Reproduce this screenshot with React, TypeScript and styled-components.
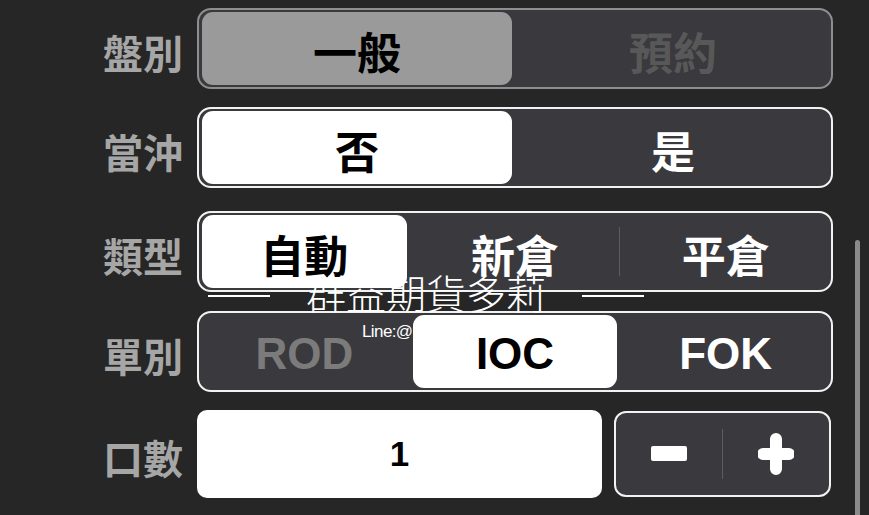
import React, { FC } from 'react';
import styled, { createGlobalStyle } from 'styled-components';

const GlobalStyle = createGlobalStyle`
  html, body {
    margin: 0;
    padding: 0;
    background: #262626;
    overflow: hidden;
  }
  body {
    font-family: 'Noto Sans CJK TC', 'Liberation Sans', sans-serif;
  }
`;

const Page = styled.div`
  position: relative;
  width: 869px;
  height: 515px;
  padding-top: 8px;
  box-sizing: border-box;
  display: flex;
  flex-direction: column;
`;

const Row = styled.div<{ $height?: number; $top?: number }>`
  display: grid;
  grid-template-columns: 183px 636px;
  column-gap: 14px;
  align-items: center;
  height: ${p => p.$height ?? 81}px;
  margin-top: ${p => p.$top ?? 0}px;
`;

const Label = styled.div`
  text-align: right;
  color: #a6a6a6;
  font-size: 40px;
  font-weight: 700;
  line-height: 1;
  padding-top: 6px;
`;

const Segmented = styled.div<{ $dim?: boolean }>`
  display: flex;
  gap: 6px;
  height: 100%;
  box-sizing: border-box;
  padding: 2px 3px;
  border: 2px solid ${p => (p.$dim ? '#8e8e8e' : '#f2f2f2')};
  border-radius: 14px;
  background: #3a393e;
`;

const Segment = styled.div<{
  $active?: boolean;
  $dim?: boolean;
  $latin?: boolean;
  $muted?: boolean;
  $divider?: boolean;
}>`
  position: relative;
  flex: 1;
  display: flex;
  align-items: center;
  justify-content: center;
  border-radius: 11px;
  background: ${p => (p.$active ? (p.$dim ? '#9a9a9a' : '#ffffff') : 'transparent')};
  color: ${p => (p.$active ? '#000' : p.$muted ? (p.$latin ? '#7b7b7b' : '#585858') : '#ffffff')};
  font-family: ${p =>
    p.$latin
      ? "'Liberation Sans', Arial, sans-serif"
      : "'Noto Sans CJK TC', sans-serif"};
  font-size: 44px;
  font-weight: 700;
  line-height: 1;
  padding-top: 4px;

  &::before {
    content: '';
    display: ${p => (p.$divider ? 'block' : 'none')};
    position: absolute;
    left: -4px;
    top: 12px;
    bottom: 12px;
    width: 1px;
    background: #5d5c62;
  }
`;

const QtyWrap = styled.div`
  display: flex;
  gap: 12px;
  height: 100%;
`;

const QtyInput = styled.div`
  width: 405px;
  background: #fff;
  border-radius: 10px;
  display: flex;
  align-items: center;
  justify-content: center;
  font-family: 'Liberation Sans', Arial, sans-serif;
  font-weight: 700;
  font-size: 35px;
  color: #000;
`;

const Stepper = styled.div`
  width: 217px;
  margin: 1px 0;
  box-sizing: border-box;
  border: 2px solid #f2f2f2;
  border-radius: 12px;
  background: #3a393e;
  display: flex;
  align-items: center;
`;

const StepButton = styled.div`
  flex: 1;
  height: 100%;
  display: flex;
  align-items: center;
  justify-content: center;
`;

const StepDivider = styled.div`
  width: 1px;
  height: 50px;
  background: #5d5c62;
`;

const ScrollBar = styled.div`
  position: absolute;
  left: 855px;
  top: 240px;
  width: 5px;
  bottom: -10px;
  border-radius: 3px;
  background: #8a8a8a;
`;

// overlay text drawn on top of the form, as in the screenshot
const Watermark = styled.div`
  position: absolute;
  left: 208px;
  top: 280px;
  width: 436px;
  pointer-events: none;
  color: #ffffff;
  font-family: 'Liberation Sans', 'Noto Sans CJK TC', sans-serif;
`;

const MarkTitle = styled.div`
  display: flex;
  align-items: center;
  justify-content: space-between;
  height: 30px;
  font-size: 40px;
  font-weight: 300;
  line-height: 30px;
`;

const MarkLine = styled.div`
  width: 62px;
  height: 2px;
  margin-top: 1px;
  background: #ffffff;
`;

const MarkSub = styled.div`
  margin: 13px 0 0 154px;
  font-size: 17px;
  letter-spacing: -0.6px;
  line-height: 18px;
`;

type Option = { text: string; active?: boolean; muted?: boolean };

const SegmentRow: FC<{
  label: string;
  options: Option[];
  top?: number;
  dim?: boolean;
  latin?: boolean;
}> = ({ label, options, top, dim, latin }) => (
  <Row $top={top}>
    <Label>{label}</Label>
    <Segmented $dim={dim}>
      {options.map((o, i) => {
        const prev = options[i - 1];
        const divider = i > 0 && !o.active && prev && !prev.active;
        return (
          <Segment
            key={o.text}
            $active={o.active}
            $dim={dim}
            $latin={latin}
            $muted={o.muted}
            $divider={divider}
          >
            {o.text}
          </Segment>
        );
      })}
    </Segmented>
  </Row>
);

const MinusIcon = () => (
  <svg width="36" height="16" viewBox="0 0 36 16">
    <rect x="0" y="0" width="36" height="15" rx="2" fill="#fff" />
  </svg>
);

const PlusIcon = () => (
  <svg width="36" height="42" viewBox="0 0 36 42">
    <path
      d="M18 6 V36 M5 21 H31"
      stroke="#fff"
      strokeWidth="12"
      strokeLinecap="round"
      fill="none"
    />
  </svg>
);

export default function App() {
  return (
    <>
      <GlobalStyle />
      <Page>
        <SegmentRow
          label="盤別"
          dim
          options={[{ text: '一般', active: true }, { text: '預約', muted: true }]}
        />
        <SegmentRow
          label="當沖"
          top={18}
          options={[{ text: '否', active: true }, { text: '是' }]}
        />
        <SegmentRow
          label="類型"
          top={23}
          options={[{ text: '自動', active: true }, { text: '新倉' }, { text: '平倉' }]}
        />
        <SegmentRow
          label="單別"
          top={19}
          latin
          options={[{ text: 'ROD', muted: true }, { text: 'IOC', active: true }, { text: 'FOK' }]}
        />
        <Row $height={88} $top={18}>
          <Label>口數</Label>
          <QtyWrap>
            <QtyInput>1</QtyInput>
            <Stepper>
              <StepButton>
                <MinusIcon />
              </StepButton>
              <StepDivider />
              <StepButton>
                <PlusIcon />
              </StepButton>
            </Stepper>
          </QtyWrap>
        </Row>
        <Watermark>
          <MarkTitle>
            <MarkLine />
            <span>群益期貨多莉</span>
            <MarkLine />
          </MarkTitle>
          <MarkSub>Line:@</MarkSub>
        </Watermark>
        <ScrollBar />
      </Page>
    </>
  );
}
